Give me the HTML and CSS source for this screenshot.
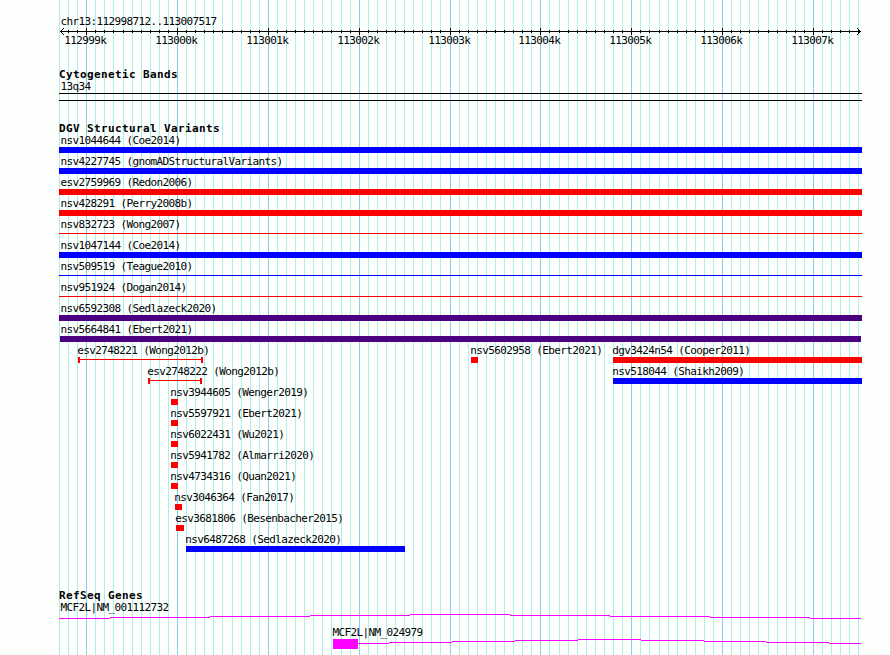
FILE: index.html
```html
<!DOCTYPE html>
<html lang="en">
<head>
<meta charset="utf-8">
<title>chr13:112998712..113007517</title>
<link rel="stylesheet" href="styles.css">
</head>
<body>
<main class="panel">
  <svg class="grid" width="890" height="655" shape-rendering="crispEdges" aria-hidden="true">
    <path id="grid-minor" class="grid-minor"/>
    <path id="grid-major" class="grid-major"/>
  </svg>
  <header class="ruler">
    <div class="label region">chr13:112998712..113007517</div>
    <svg class="axis" width="803" height="7" viewBox="59 28 803 7" shape-rendering="crispEdges">
      <path d="M60 31.5H861"/>
      <path id="ticks"/>
      <path d="M61 30.5h1M62 29.5h1M63 28.5h1M61 32.5h1M62 33.5h1M63 34.5h1M859 30.5h1M858 29.5h1M857 28.5h1M859 32.5h1M858 33.5h1M857 34.5h1"/>
    </svg>
    <div id="tick-labels" class="tick-labels"></div>
  </header>

  <section class="track cytobands">
    <h2>Cytogenetic Bands</h2>
    <div class="label">13q34</div>
    <div class="band"></div>
  </section>

  <section class="track variants">
    <h2>DGV Structural Variants</h2>
    <div id="variants"></div>
  </section>

  <section class="track genes">
    <h2>RefSeq Genes</h2>
    <div class="label">MCF2L|NM_001112732</div>
    <svg class="gene" width="803" height="12" viewBox="59 614 803 12" shape-rendering="crispEdges">
      <path d="M59 618.5H110M110 617.5H210M210 616.5H310M310 615.5H410M410 614.5H510M510 615.5H610M610 616.5H710M710 617.5H810M810 618.5H861"/>
    </svg>
    <div class="label second-gene">MCF2L|NM_024979</div>
    <svg class="gene" width="803" height="16" viewBox="59 639 803 16" shape-rendering="crispEdges">
      <rect x="333" y="639" width="25" height="10"/>
      <path d="M358 643.5H389M389 642.5H452M452 641.5H515M515 640.5H578M578 639.5H641M641 640.5H704M704 641.5H766M766 642.5H829M829 643.5H861"/>
    </svg>
  </section>
</main>
<script src="tracks.js"></script>
</body>
</html>
```
FILE: styles.css
```css
* {
  box-sizing: border-box;
}

body {
  margin: 0;
  background: #fdfffc;
  color: #000;
  overflow: hidden;
}

.panel {
  position: relative;
  width: 890px;
  height: 655px;
  padding: 15px 28px 0 59px;
  overflow: hidden;
  font: 11px/13px "DejaVu Sans Mono", monospace;
  letter-spacing: -0.622px;
}

/* Grid lines lie behind every track. */
.grid {
  position: absolute;
  inset: 0;
  z-index: 0;
}

.grid path {
  fill: none;
  stroke-width: 1;
}

.grid .grid-minor { stroke: #afeeee; }
.grid .grid-major { stroke: #87ceeb; }

.ruler,
.track {
  position: relative;
  z-index: 1;
}

.label {
  height: 13px;
  padding-left: 1.4px;
  white-space: nowrap;
}

.axis {
  display: block;
  height: 7px;
}

.axis path {
  fill: none;
  stroke: #000;
}

.tick-labels {
  display: flex;
  height: 13px;
  margin-top: -1px;
}

.tick-labels span {
  flex: none;
  width: 42px;
  white-space: nowrap;
}

h2 {
  height: 12px;
  margin: 0;
  font-size: 11px;
  line-height: 13px;
  font-weight: bold;
  letter-spacing: 0.378px;
  white-space: nowrap;
}

.cytobands { margin-top: 21px; }

.band {
  width: 803px;
  height: 8px;
  border: solid #000;
  border-width: 1px 0;
}

.variants { margin-top: 21px; }

.row {
  display: flex;
  height: 21px;
}

.feature {
  flex: none;
  height: 21px;
}

.feature .label {
  padding-left: 0;
  margin-left: -0.7px;
}

.feature.full .label { margin-left: 1.4px; }

.feature.inset .label { margin-left: 0.4px; }

.glyph { height: 6px; }

.blue { background: #00f; }
.red { background: #f00; }
.indigo { background: #4b0082; }

.glyph.thin {
  height: 1px;
  margin-top: 2px;
}

.glyph.span {
  border: solid #f00;
  border-width: 0 2px;
  background: linear-gradient(#f00, #f00) 0 2px / 100% 1px no-repeat;
}

.genes { margin-top: 35px; }

.second-gene { padding-left: 273.4px; }

.gene { display: block; }

.gene path {
  fill: none;
  stroke: #f0f;
}

.gene rect { fill: #f0f; }
```
FILE: tracks.js
```js
const START = 112998712;
const END = 113007517;
const LEFT = 60;
const SCALE = 800 / (END - START + 1);
const toX = (bp) => Math.round(LEFT + (bp - START) * SCALE);

let minor = "", major = "", ticks = "";
const labels = document.getElementById("tick-labels");
let cursor = 59;

for (let bp = 112998700; bp <= 113007500; bp += 100) {
  const x = toX(bp);
  const isMajor = bp % 1000 === 0;
  const line = `M${x + 0.5} 0V655`;
  if (isMajor) {
    major += line;
    ticks += `M${x + 0.5} 28V35`;
    const label = document.createElement("span");
    label.textContent = bp / 1000 + "k";
    label.style.marginLeft = x - 21.7 - cursor + "px";
    cursor = x + 20.3;
    labels.append(label);
  } else {
    minor += line;
    if (x >= LEFT) ticks += `M${x + 0.5} 30V33`;
  }
}
document.getElementById("grid-minor").setAttribute("d", minor);
document.getElementById("grid-major").setAttribute("d", major);
document.getElementById("ticks").setAttribute("d", ticks);

// Each row holds features as [label, left, right, style].
const rows = [
  [["nsv1044644 (Coe2014)", 59, 862, "blue"]],
  [["nsv4227745 (gnomADStructuralVariants)", 59, 862, "blue"]],
  [["esv2759969 (Redon2006)", 59, 862, "red"]],
  [["nsv428291 (Perry2008b)", 59, 862, "red"]],
  [["nsv832723 (Wong2007)", 59, 862, "red thin"]],
  [["nsv1047144 (Coe2014)", 59, 862, "blue"]],
  [["nsv509519 (Teague2010)", 59, 862, "blue thin"]],
  [["nsv951924 (Dogan2014)", 59, 862, "red thin"]],
  [["nsv6592308 (Sedlazeck2020)", 59, 862, "indigo"]],
  [["nsv5664841 (Ebert2021)", 60, 861, "indigo"]],
  [["esv2748221 (Wong2012b)", 78, 203, "span"],
   ["nsv5602958 (Ebert2021)", 471, 478, "red"],
   ["dgv3424n54 (Cooper2011)", 613, 862, "red"]],
  [["esv2748222 (Wong2012b)", 148, 202, "span"],
   ["nsv518044 (Shaikh2009)", 613, 862, "blue"]],
  [["nsv3944605 (Wenger2019)", 171, 178, "red"]],
  [["nsv5597921 (Ebert2021)", 171, 178, "red"]],
  [["nsv6022431 (Wu2021)", 171, 178, "red"]],
  [["nsv5941782 (Almarri2020)", 171, 178, "red"]],
  [["nsv4734316 (Quan2021)", 171, 178, "red"]],
  [["nsv3046364 (Fan2017)", 175, 182, "red"]],
  [["esv3681806 (Besenbacher2015)", 176, 184, "red"]],
  [["nsv6487268 (Sedlazeck2020)", 186, 405, "blue"]]
];

const variantClass = { 59: "feature full", 60: "feature inset" };
const container = document.getElementById("variants");
for (const features of rows) {
  const row = document.createElement("div");
  row.className = "row";
  let x = 59;
  for (const [name, left, right, style] of features) {
    const feature = document.createElement("div");
    feature.className = variantClass[left] || "feature";
    feature.style.marginLeft = left - x + "px";
    feature.style.width = right - left + "px";
    const label = document.createElement("div");
    label.className = "label";
    label.textContent = name;
    const glyph = document.createElement("div");
    glyph.className = "glyph " + style;
    feature.append(label, glyph);
    row.append(feature);
    x = right;
  }
  container.append(row);
}
```
